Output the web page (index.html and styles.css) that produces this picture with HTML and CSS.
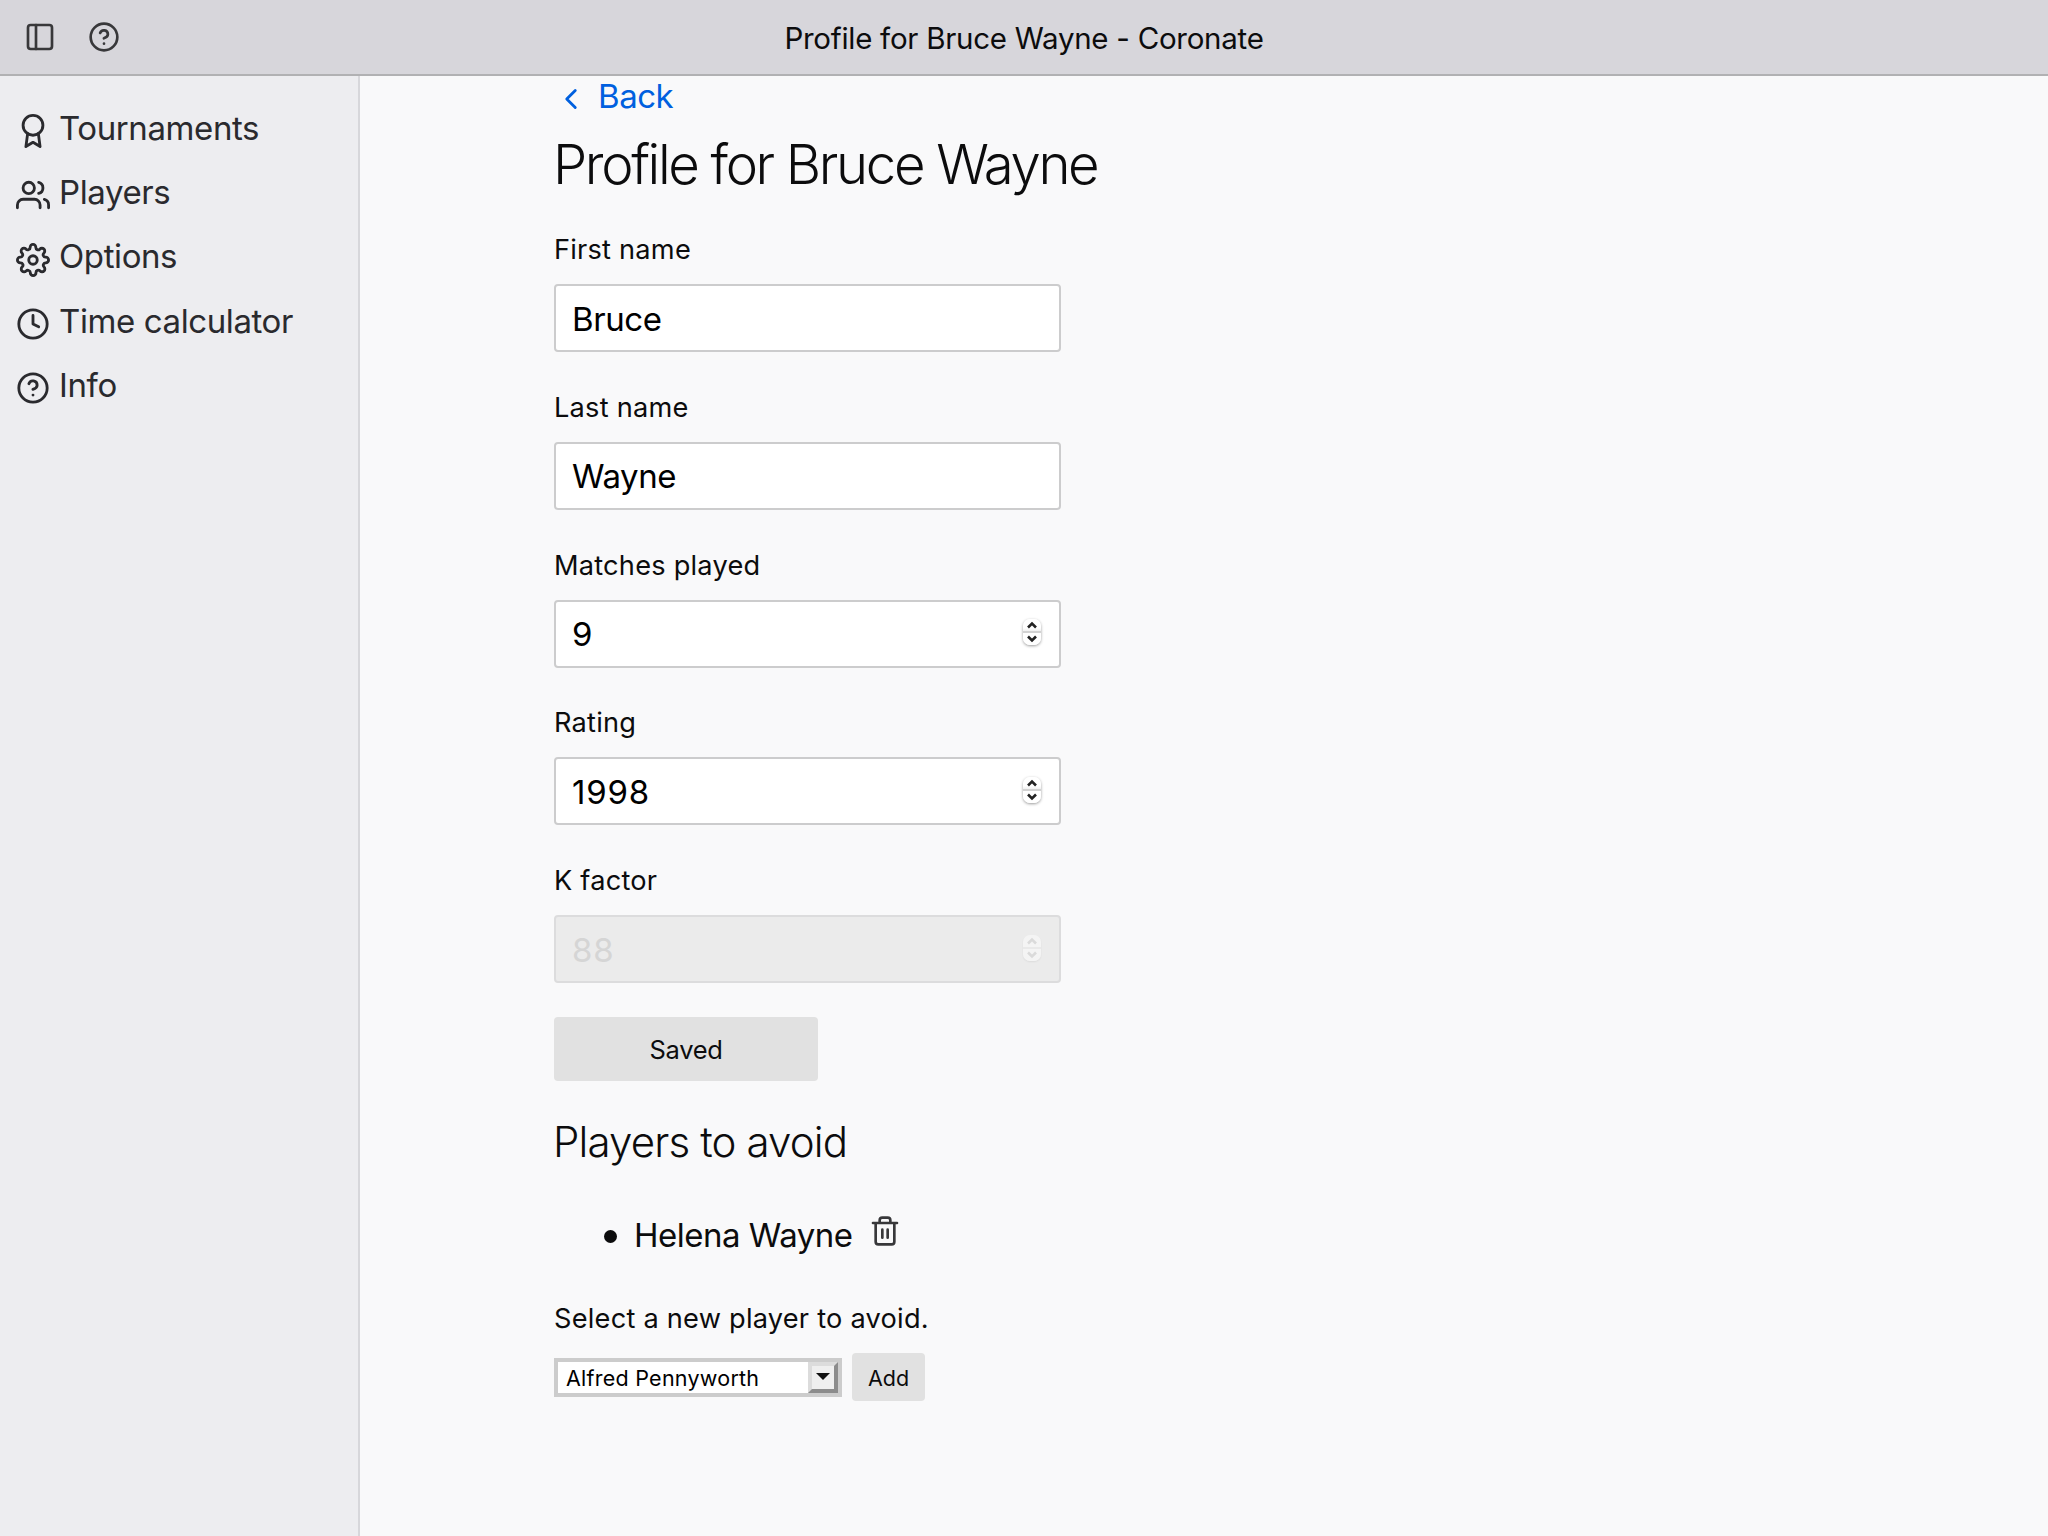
FILE: index.html
```html
<!DOCTYPE html>
<html lang="en">
<head>
<meta charset="utf-8">
<title>Profile for Bruce Wayne - Coronate</title>
<link rel="stylesheet" href="styles.css">
</head>
<body>
<svg class="defs" width="0" height="0" aria-hidden="true">
  <symbol id="help" viewBox="0 0 24 24"><circle cx="12" cy="12" r="10"/><path d="M9.09 9a3 3 0 0 1 5.83 1c0 2-3 3-3 3"/><path d="M12 17h.01"/></symbol>
  <symbol id="spin" viewBox="0 0 18 26"><path d="M5 8.5 9 4.5 13 8.5M5 17.5 9 21.5 13 17.5"/></symbol>
</svg>
<header class="titlebar">
  <div class="tools">
    <svg class="icon tool" viewBox="0 0 24 24"><rect x="3" y="3" width="18" height="18" rx="2"/><path d="M9 3v18"/></svg>
    <svg class="icon tool help"><use href="#help"/></svg>
  </div>
  <div class="title">Profile for Bruce Wayne - Coronate</div>
</header>
<div class="window">
  <nav class="sidebar">
    <a class="link"><svg class="icon" viewBox="0 0 24 24"><circle cx="12" cy="8" r="7"/><path d="M8.21 13.89 7 23l5-3 5 3-1.21-9.12"/></svg><span>Tournaments</span></a>
    <a class="link"><svg class="icon" viewBox="0 0 24 24"><path d="M17 21v-2a4 4 0 0 0-4-4H5a4 4 0 0 0-4 4v2"/><circle cx="9" cy="7" r="4"/><path d="M23 21v-2a4 4 0 0 0-3-3.87M16 3.13a4 4 0 0 1 0 7.75"/></svg><span>Players</span></a>
    <a class="link"><svg class="icon" viewBox="0 0 24 24"><circle cx="12" cy="12" r="3"/><path d="M19.4 15a1.65 1.65 0 0 0 .33 1.82l.06.06a2 2 0 1 1-2.83 2.83l-.06-.06a1.65 1.65 0 0 0-2.8 1.17V21a2 2 0 0 1-4 0v-.09A1.65 1.65 0 0 0 9 19.4a1.65 1.65 0 0 0-1.82.33l-.06.06a2 2 0 1 1-2.83-2.83l.06-.06A1.65 1.65 0 0 0 3.09 14H3a2 2 0 0 1 0-4h.09A1.65 1.65 0 0 0 4.6 9a1.65 1.65 0 0 0-.33-1.82l-.06-.06a2 2 0 1 1 2.83-2.83l.06.06A1.65 1.65 0 0 0 9 4.6a1.65 1.65 0 0 0 1-1.51V3a2 2 0 0 1 4 0v.09a1.65 1.65 0 0 0 2.82 1.26l.06-.06a2 2 0 1 1 2.83 2.83l-.06.06A1.65 1.65 0 0 0 20.91 10H21a2 2 0 0 1 0 4h-.09a1.65 1.65 0 0 0-1.51 1z"/></svg><span>Options</span></a>
    <a class="link"><svg class="icon" viewBox="0 0 24 24"><circle cx="12" cy="12" r="10"/><path d="M12 6v6l4 2"/></svg><span>Time calculator</span></a>
    <a class="link"><svg class="icon"><use href="#help"/></svg><span>Info</span></a>
  </nav>
  <main class="content">
    <a class="back"><svg class="icon chevron" viewBox="0 0 24 24"><path d="M15 18 9 12l6-6"/></svg><span>Back</span></a>
    <h1>Profile for Bruce Wayne</h1>
    <form class="fields">
      <div class="field"><label>First name</label><div class="box"><span>Bruce</span></div></div>
      <div class="field"><label>Last name</label><div class="box"><span>Wayne</span></div></div>
      <div class="field"><label>Matches played</label><div class="box number"><span>9</span><i class="spinner"><svg><use href="#spin"/></svg></i></div></div>
      <div class="field"><label>Rating</label><div class="box number"><span>1998</span><i class="spinner"><svg><use href="#spin"/></svg></i></div></div>
      <div class="field"><label>K factor</label><div class="box number disabled"><span>88</span><i class="spinner"><svg><use href="#spin"/></svg></i></div></div>
    </form>
    <button class="btn save">Saved</button>
    <h2>Players to avoid</h2>
    <ul class="avoid">
      <li><span>Helena Wayne</span><svg class="icon trash" viewBox="0 0 24 24"><path d="M3 6h18M19 6v14a2 2 0 0 1-2 2H7a2 2 0 0 1-2-2V6M8 6V4a2 2 0 0 1 2-2h4a2 2 0 0 1 2 2v2M10 11v6M14 11v6"/></svg></li>
    </ul>
    <p class="hint">Select a new player to avoid.</p>
    <div class="picker">
      <div class="select"><span>Alfred Pennyworth</span><i class="arrow"><svg viewBox="0 0 14 8"><path d="M0 0h14L7 7z"/></svg></i></div>
      <button class="btn add">Add</button>
    </div>
  </main>
</div>
</body>
</html>
```
FILE: styles.css
```css
* { box-sizing: border-box; }
body {
  margin: 0;
  height: 1536px;
  overflow: hidden;
  display: flex;
  flex-direction: column;
  font-family: Inter, "Liberation Sans", sans-serif;
  font-size: 33px;
  letter-spacing: -0.45px;
  line-height: 40px;
  color: #0c0c0d;
  background: #f9f9fa;
}
.defs { position: absolute; }
.icon {
  flex: none;
  width: 34px;
  height: 34px;
  fill: none;
  stroke: currentColor;
  stroke-width: 2;
  stroke-linecap: round;
  stroke-linejoin: round;
}
.titlebar {
  flex: none;
  display: grid;
  grid-template-columns: 1fr auto 1fr;
  align-items: center;
  height: 76px;
  background: #d7d6db;
  border-bottom: 2px solid #b1b1b3;
}
.tools { display: flex; align-items: center; gap: 32px; padding-left: 24px; color: #38383a; }
.tool { width: 32px; height: 32px; }
.title { font-size: 29.5px; letter-spacing: -0.27px; padding-top: 1px; }
.window { flex: 1; display: flex; }
.sidebar {
  width: 360px;
  padding: 20.5px 0 0 16px;
  background: #ededf0;
  border-right: 2px solid #d7d7db;
  color: #2a2a2e;
}
.link { display: flex; align-items: center; height: 64.3px; gap: 9px; letter-spacing: -0.4px; }
.link span { padding-bottom: 2px; }
.link .icon { position: relative; top: 2.5px; }
.content { flex: 1; padding-left: 194px; }
.back { display: flex; align-items: center; height: 40px; color: #0060df; gap: 10px; }
.chevron { position: relative; top: 3px; }
h1, h2 { margin: 0; font-weight: 330; }
h1 { margin-top: 16px; margin-left: -1px; font-size: 54.5px; letter-spacing: -2.35px; line-height: 64px; }
.fields { display: flex; flex-direction: column; gap: 35.75px; margin: 34px 0 34px; }
.field { display: flex; flex-direction: column; gap: 14px; font-size: 27.2px; letter-spacing: 0.22px; }
.box {
  display: flex;
  align-items: center;
  justify-content: space-between;
  width: 507px;
  height: 68px;
  padding: 0 18px 0 16px;
  font-size: 33px;
  letter-spacing: -0.4px;
  color: #000;
  background: #fff;
  border: 2px solid #cccccd;
  border-radius: 4px;
}
.box span { padding-top: 1px; }
.number { letter-spacing: 0.8px; }
.spinner {
  width: 18px;
  height: 26px;
  margin-top: -3px;
  border-radius: 7px;
  background: linear-gradient(#fff 0 9px, #f0f0f0 12px, #d2d2d2 12px 14px, #fff 14px);
  box-shadow: 0 1px 3px #0006;
}
.spinner svg { display: block; width: 18px; height: 26px; fill: none; stroke: #222; stroke-width: 2.6; }
.disabled { background: #ebebeb; border-color: #dcdcdd; color: #d5d5d5; }
.disabled .spinner { background: linear-gradient(#f4f4f4 0 12px, #e9e9e9 12px 14px, #f4f4f4 14px); box-shadow: 0 1px 2px #0001; }
.disabled .spinner svg { stroke: #dadada; }
.btn {
  display: block;
  padding: 0;
  border: 0;
  border-radius: 4px;
  background: #e1e1e1;
  color: #0c0c0d;
  font-family: inherit;
}
.save { width: 264px; height: 64px; font-size: 25.5px; letter-spacing: -0.3px; padding-top: 1px; }
h2 { margin-top: 35px; margin-left: -1px; font-size: 42px; letter-spacing: -0.85px; line-height: 52px; }
.avoid { margin: 47px 0 44px; padding-left: 80px; list-style: none; }
.avoid li { display: flex; align-items: center; height: 40px; letter-spacing: -0.5px; }
.avoid li::before { content: ""; width: 13px; height: 13px; margin: 3px 17px 0 -30px; border-radius: 50%; background: #0c0c0d; }
.trash { width: 32px; height: 32px; margin: -9px 0 0 17px; color: #38383a; }
.hint { margin: 0 0 14px; font-size: 27.2px; letter-spacing: 0.23px; }
.picker { display: flex; align-items: center; gap: 10px; }
.select {
  display: flex;
  justify-content: space-between;
  align-items: center;
  width: 288px;
  height: 39px;
  padding-left: 8px;
  border: 4px solid #ccc;
  background: #fff;
  color: #000;
  font-size: 21.5px;
  letter-spacing: 0.25px;
}
.select span { padding-top: 1px; }
.arrow {
  display: flex;
  justify-content: center;
  padding-top: 7px;
  width: 30px;
  height: 31px;
  background: #efefef;
  border: 4px solid;
  border-color: #dcdcdc #8c8c8c #8c8c8c #dcdcdc;
}
.arrow svg { width: 14px; height: 8px; fill: #111; }
.add { width: 73px; height: 48px; font-size: 21.5px; padding-top: 1px; }
```
